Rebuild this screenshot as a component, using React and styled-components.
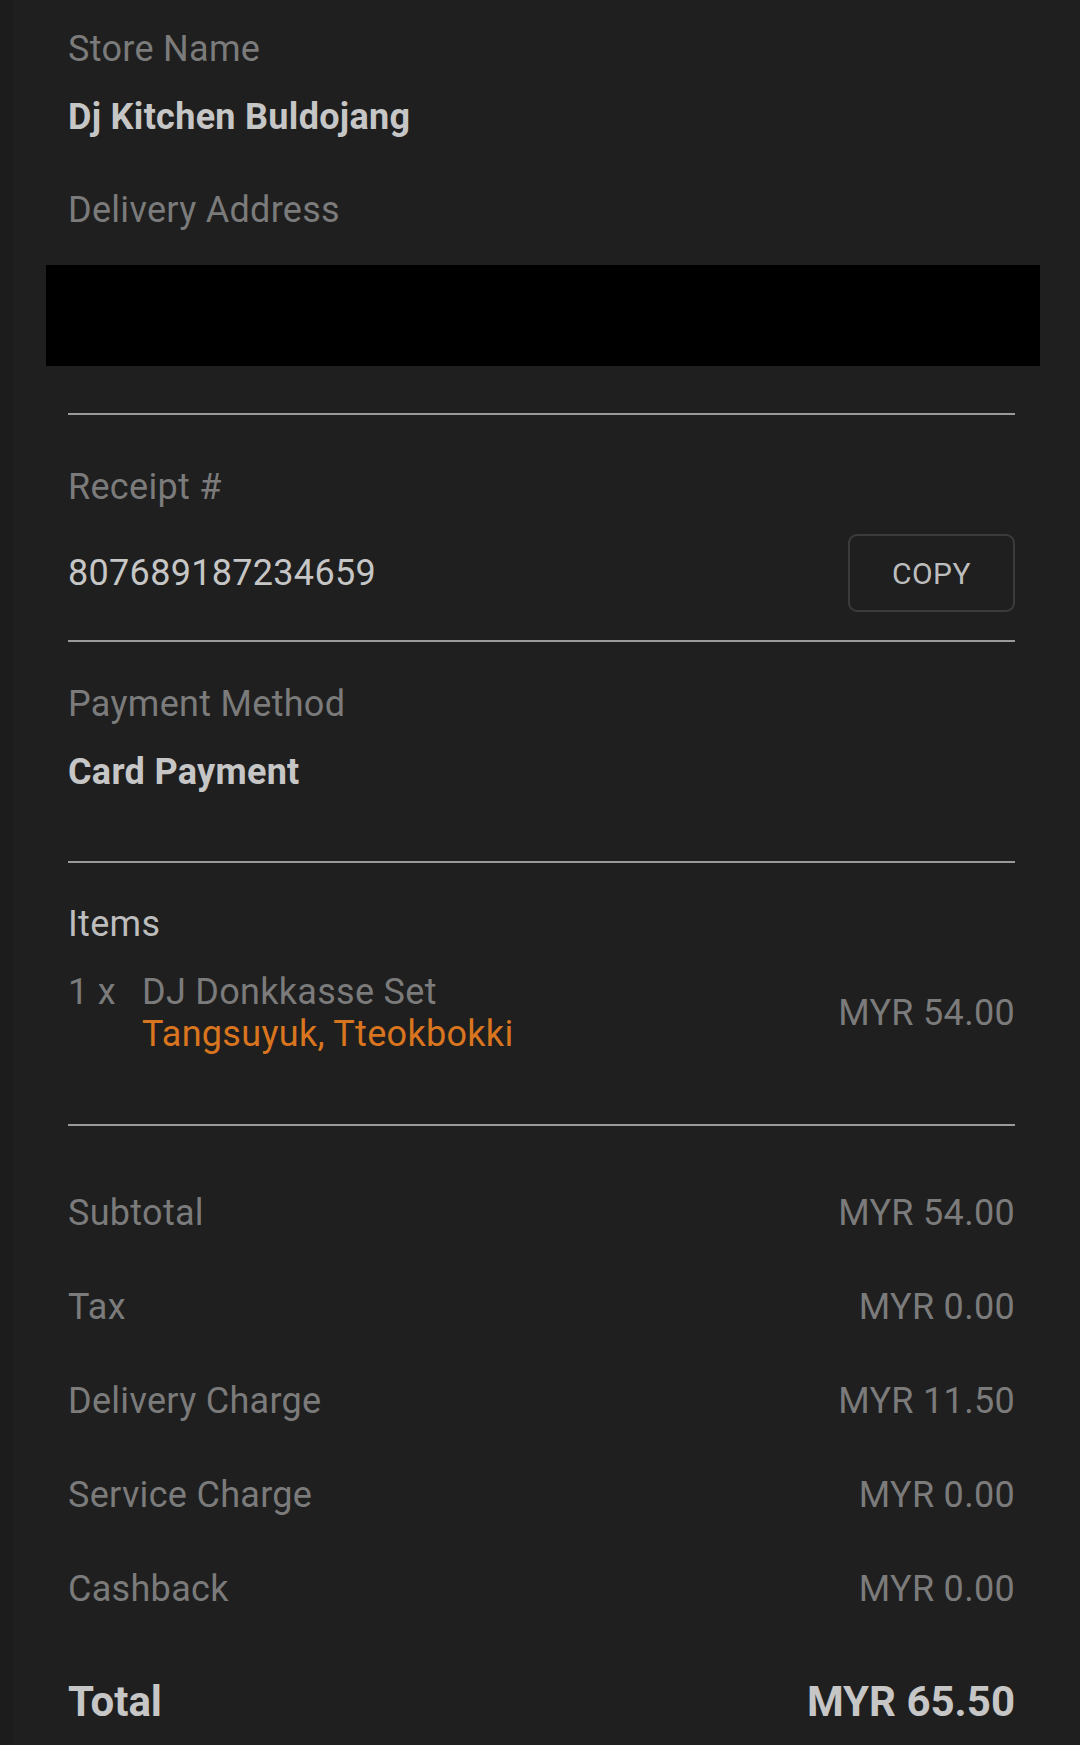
import React from "react";
import styled, { createGlobalStyle } from "styled-components";

const Global = createGlobalStyle`
  html, body { margin: 0; padding: 0; background: #1f1f1f; }
  body { font-family: Roboto, "Noto Sans", "Liberation Sans", sans-serif; -webkit-font-smoothing: antialiased; }
`;

const Page = styled.div`
  min-height: 1745px;
  background: #1f1f1f;
  box-shadow: inset 13px 0 0 #1c1c1c;
  padding: 25px 65px 0 68px;
  box-sizing: border-box;
  display: flex;
  flex-direction: column;
`;

const Label = styled.div`
  font-size: 36px;
  letter-spacing: 0.3px;
  line-height: 48px;
  color: ${(p) => (p.$light ? "#bdbdbd" : "#7b7b7b")};
  margin-top: ${(p) => p.$mt || 0}px;
`;

const Value = styled.div`
  font-size: 36px;
  letter-spacing: 0.3px;
  line-height: 48px;
  font-weight: 700;
  color: #c6c6c6;
  margin-top: ${(p) => p.$mt || 0}px;
`;

const Redacted = styled.div`
  margin: 31px -25px 0 -22px;
  height: 101px;
  background: #000;
`;

const Divider = styled.div`
  height: 2px;
  background: #9a9a9a;
  margin-top: ${(p) => p.$mt || 0}px;
`;

const ReceiptRow = styled.div`
  display: flex;
  align-items: center;
  justify-content: space-between;
  height: 78px;
  margin-top: 23px;
`;

const ReceiptNo = styled.div`
  font-size: 36px;
  color: #c6c6c6;
  letter-spacing: 0.3px;
`;

const CopyButton = styled.button`
  width: 167px;
  height: 78px;
  box-sizing: border-box;
  border: 2px solid #3b3b3b;
  border-radius: 9px;
  background: transparent;
  color: #bdbdbd;
  font-family: inherit;
  font-size: 30px;
  letter-spacing: 0.5px;
  padding: 0;
`;

const ItemRow = styled.div`
  display: flex;
  align-items: center;
  margin-top: 23px;
`;

const Qty = styled.div`
  width: 74px;
  align-self: flex-start;
  font-size: 36px;
  letter-spacing: 0.3px;
  line-height: 42px;
  color: #7b7b7b;
`;

const ItemInfo = styled.div`
  flex: 1;
  display: flex;
  flex-direction: column;
`;

const ItemName = styled.div`
  font-size: 36px;
  letter-spacing: 0.3px;
  line-height: 42px;
  color: ${(p) => (p.$accent ? "#d8751e" : "#7b7b7b")};
`;

const Price = styled.div`
  font-size: 36px;
  letter-spacing: 0.3px;
  color: #7b7b7b;
`;

const SummaryList = styled.div`
  margin-top: 40px;
  display: flex;
  flex-direction: column;
`;

const SummaryRow = styled.div`
  display: flex;
  justify-content: space-between;
  align-items: center;
  height: 94px;
  font-size: 36px;
  letter-spacing: 0.3px;
  color: #7b7b7b;
`;

const TotalRow = styled.div`
  display: flex;
  justify-content: space-between;
  align-items: center;
  height: 60px;
  margin-top: 35px;
  font-size: 42px;
  font-weight: 700;
  color: #c6c6c6;
`;

const summary = [
  ["Subtotal", "MYR 54.00"],
  ["Tax", "MYR 0.00"],
  ["Delivery Charge", "MYR 11.50"],
  ["Service Charge", "MYR 0.00"],
  ["Cashback", "MYR 0.00"],
];

export default function App() {
  return (
    <>
      <Global />
      <Page>
        <Label>Store Name</Label>
        <Value $mt={20}>Dj Kitchen Buldojang</Value>
        <Label $mt={45}>Delivery Address</Label>
        <Redacted />
        <Divider $mt={47} />
        <Label $mt={48}>Receipt #</Label>
        <ReceiptRow>
          <ReceiptNo>807689187234659</ReceiptNo>
          <CopyButton>COPY</CopyButton>
        </ReceiptRow>
        <Divider $mt={28} />
        <Label $mt={38}>Payment Method</Label>
        <Value $mt={20}>Card Payment</Value>
        <Divider $mt={65} />
        <Label $mt={37} $light>Items</Label>
        <ItemRow>
          <Qty>1 x</Qty>
          <ItemInfo>
            <ItemName>DJ Donkkasse Set</ItemName>
            <ItemName $accent>Tangsuyuk, Tteokbokki</ItemName>
          </ItemInfo>
          <Price>MYR 54.00</Price>
        </ItemRow>
        <Divider $mt={69} />
        <SummaryList>
          {summary.map(([k, v]) => (
            <SummaryRow key={k}>
              <span>{k}</span>
              <span>{v}</span>
            </SummaryRow>
          ))}
        </SummaryList>
        <TotalRow>
          <span>Total</span>
          <span>MYR 65.50</span>
        </TotalRow>
      </Page>
    </>
  );
}
